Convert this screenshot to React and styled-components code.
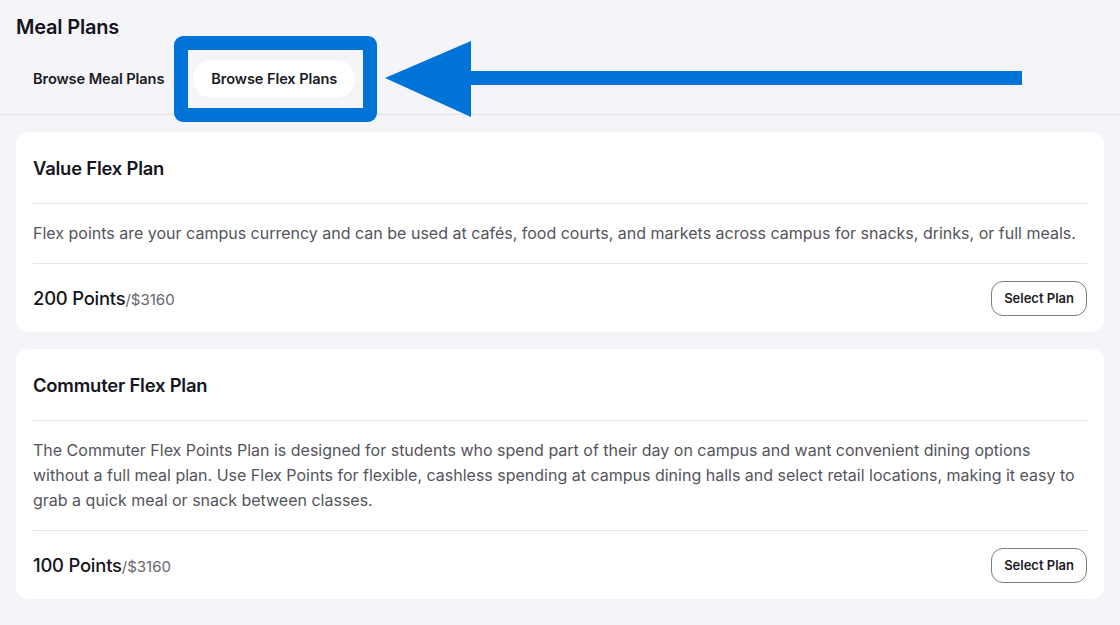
import React from "react";
import styled, { createGlobalStyle } from "styled-components";

const Global = createGlobalStyle`
  html, body { margin: 0; padding: 0; }
  body {
    background: #f4f4f9;
    font-family: Inter, "Noto Sans", "Liberation Sans", sans-serif;
    color: #1c1b24;
    -webkit-font-smoothing: antialiased;
  }
`;

const Page = styled.div`
  width: 1120px;
  min-height: 625px;
  background: #f4f4f9;
  position: relative;
`;

const Header = styled.header`
  padding: 14px 16px 0;
  border-bottom: 1px solid #e3e3ea;
  position: relative;
`;

const Title = styled.h1`
  margin: 0;
  font-size: 20px;
  line-height: 26px;
  font-weight: 600;
  letter-spacing: -0.2px;
  color: #16151d;
`;

const Tabs = styled.nav`
  display: flex;
  align-items: center;
  gap: 12px;
  padding: 20px 0 16px;
  position: relative;
`;

const Tab = styled.button`
  border: none;
  font-family: inherit;
  font-size: 14.6px;
  font-weight: 600;
  color: #1c1b24;
  height: 38px;
  border-radius: 19px;
  padding: 0 ${(p) => (p.$active ? "18px" : "17px")};
  background: ${(p) => (p.$active ? "#ffffff" : "transparent")};
  cursor: pointer;
  letter-spacing: -0.1px;
`;

const HighlightBox = styled.div`
  position: absolute;
  left: 158px;
  top: -4px;
  width: 175px;
  height: 58px;
  border: 14px solid #0073d9;
  border-radius: 9px;
  pointer-events: none;
`;

const Arrow = styled.svg`
  position: absolute;
  left: 369px;
  top: 1px;
  pointer-events: none;
`;

const Main = styled.main`
  padding: 17px 16px 24px;
  display: flex;
  flex-direction: column;
  gap: 17px;
`;

const Card = styled.section`
  background: #ffffff;
  border-radius: 12px;
  padding: 0 17px;
`;

const CardHeader = styled.div`
  height: 71px;
  display: flex;
  align-items: center;
  border-bottom: 1px solid #e6e6ea;
`;

const CardTitle = styled.h2`
  margin: 0;
  font-size: 18.4px;
  font-weight: 600;
  letter-spacing: -0.2px;
  color: #16151d;
`;

const Description = styled.p`
  margin: 0;
  padding: 17px 0;
  font-size: 16px;
  line-height: 25px;
  color: #55545c;
  border-bottom: 1px solid #e6e6ea;
`;

const Footer = styled.div`
  height: 68px;
  display: flex;
  align-items: center;
  justify-content: space-between;
`;

const Price = styled.div`
  font-size: 18.4px;
  font-weight: 500;
  color: #16151d;
  letter-spacing: -0.2px;
`;

const PriceSub = styled.span`
  font-size: 15px;
  font-weight: 400;
  color: #66656d;
  letter-spacing: 0;
`;

const SelectButton = styled.button`
  height: 35px;
  padding: 0 12px;
  border: 1px solid #7d7c84;
  border-radius: 12px;
  background: #ffffff;
  font-family: inherit;
  font-size: 13px;
  font-weight: 600;
  color: #1c1b24;
  cursor: pointer;
`;

const plans = [
  {
    name: "Value Flex Plan",
    desc:
      "Flex points are your campus currency and can be used at cafés, food courts, and markets across campus for snacks, drinks, or full meals.",
    points: "200 Points",
    price: "/$3160",
  },
  {
    name: "Commuter Flex Plan",
    desc:
      "The Commuter Flex Points Plan is designed for students who spend part of their day on campus and want convenient dining options without a full meal plan. Use Flex Points for flexible, cashless spending at campus dining halls and select retail locations, making it easy to grab a quick meal or snack between classes.",
    points: "100 Points",
    price: "/$3160",
  },
];

export default function App() {
  return (
    <Page>
      <Global />
      <Header>
        <Title>Meal Plans</Title>
        <Tabs>
          <Tab>Browse Meal Plans</Tab>
          <Tab $active>Browse Flex Plans</Tab>
          <HighlightBox />
          <Arrow width="638" height="76" viewBox="0 0 638 76">
            <polygon points="0,37 86,0 86,76" fill="#0073d9" />
            <rect x="84" y="30" width="553" height="14" fill="#0073d9" />
          </Arrow>
        </Tabs>
      </Header>
      <Main>
        {plans.map((p) => (
          <Card key={p.name}>
            <CardHeader>
              <CardTitle>{p.name}</CardTitle>
            </CardHeader>
            <Description>{p.desc}</Description>
            <Footer>
              <Price>
                {p.points}
                <PriceSub>{p.price}</PriceSub>
              </Price>
              <SelectButton>Select Plan</SelectButton>
            </Footer>
          </Card>
        ))}
      </Main>
    </Page>
  );
}
